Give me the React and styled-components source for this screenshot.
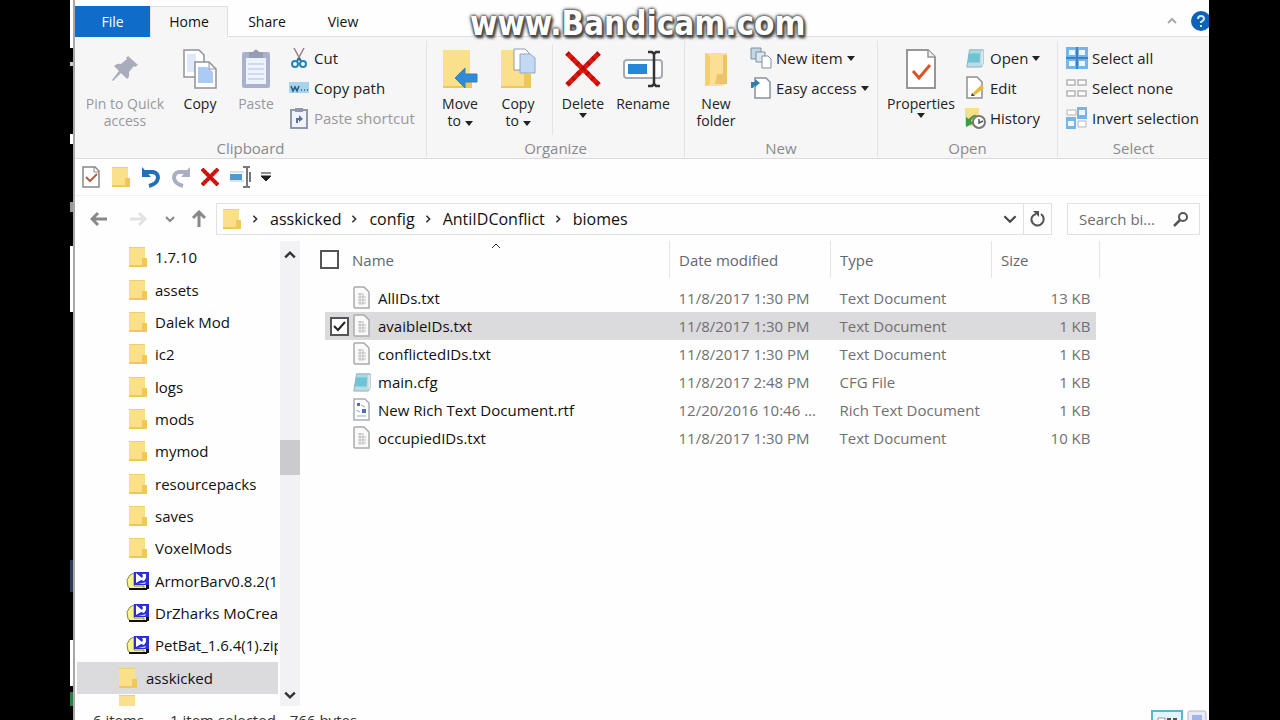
import React from "react";
import styled, { createGlobalStyle, css } from "styled-components";

const GlobalStyle = createGlobalStyle`
  * { box-sizing: border-box; }
  body {
    margin: 0;
    background: #000;
    color: #111;
    font-family: "Open Sans", "Noto Sans", sans-serif;
    font-size: 15px;
    line-height: 20px;
  }
  button, input {
    font: inherit;
    color: inherit;
  }
`;

/* ---------- icons ---------- */

const FolderIcon = ({ w = 20, h = 22 }) => (
  <svg width={w} height={h} viewBox="0 0 20 22" aria-hidden="true">
    <path d="M1 1h16v19H1z" fill="#fbe08a" />
    <path d="M14 12h5v9H1v-2h13z" fill="#f0c75c" />
    <path d="M1 1h16v1H1z" fill="#f0cf74" />
  </svg>
);

const ZipIcon = () => (
  <svg width="24" height="20" viewBox="0 0 24 20" aria-hidden="true">
    <path d="M8 2L4 4 1 9l1 7 3 2h13v-3H8z" fill="#f4f58c" stroke="#8a8a3a" />
    <path d="M3 17h18v2H3zM20 14h3v4h-3z" fill="#111" />
    <path d="M8 1h15v13H8z" fill="#2a2fd8" />
    <path d="M10 2l6 5 1-2-1-2h4v4l-2 3-3-1-5 3z" fill="#fff" />
    <path d="M12 13h7l1-2z" fill="#c9caf6" />
  </svg>
);

const TextFileIcon = () => (
  <svg width="20" height="24" viewBox="0 0 20 24" aria-hidden="true">
    <path d="M3 1h9l5 5v16H3q-1 0-1-1V2q0-1 1-1z" fill="#fafafa" stroke="#aaa" strokeWidth="1.5" />
    <path d="M6 8h4M6 11h8M6 14h8M6 17h8M8 7v12M11 7v12" stroke="#bdbdbd" />
  </svg>
);

const CfgIcon = ({ w = 20, h = 22 }) => (
  <svg width={w} height={h} viewBox="0 0 22 22" aria-hidden="true">
    <path d="M5 2h15v15l-2 4H2z" fill="#b9dbe4" stroke="#93aab2" />
    <path d="M5 3h12l-1 13H3z" fill="#6fc3d3" />
    <path d="M5 3h12v3H5z" fill="#a4dbe5" />
    <path d="M18 3h2v14l-2 3z" fill="#dfe9ec" />
  </svg>
);

const RtfIcon = () => (
  <svg width="20" height="24" viewBox="0 0 20 24" aria-hidden="true">
    <path d="M2 1h11l4 4v17H2z" fill="#fff" stroke="#a9adb5" strokeWidth="1.5" />
    <path d="M5 5h3v3H5zM10 11h4v4h-4z" fill="#4a6fb5" />
    <path d="M9 7l4 2M4 12l4 2M5 18h9" stroke="#8fa8d0" />
  </svg>
);

const PinIcon = () => (
  <svg width="30" height="32" viewBox="0 0 30 32" aria-hidden="true">
    <path d="M18 3l10 9-3 2-1-1-5 6q1 5-2 7l-6-6-8 8-1-1 7-9-5-5q3-3 7-2l6-5-1-1z" fill="#a9acba" />
  </svg>
);

const CopyIcon = () => (
  <svg width="36" height="42" viewBox="0 0 36 42" aria-hidden="true">
    <path d="M2 2h15l5 5v22H2z" fill="#fff" stroke="#8f939c" strokeWidth="1.5" />
    <path d="M5 6h9v18H5z" fill="#dfe8f8" />
    <path d="M13 14h14l7 7v19H13z" fill="#fff" stroke="#8f939c" strokeWidth="1.5" />
    <path d="M16 19h9l6 5v11H16z" fill="#a9cbf4" />
    <path d="M27 14v7h7" fill="none" stroke="#8f939c" />
  </svg>
);

const PasteIcon = () => (
  <svg width="32" height="42" viewBox="0 0 32 42" aria-hidden="true">
    <rect x="2" y="4" width="28" height="36" rx="2" fill="#aab1cc" />
    <path d="M6 10h20v26H6z" fill="#eef2fb" />
    <path d="M9 4h4q3-5 6 0h4v6H9z" fill="#969cb2" />
    <path d="M8 16h16M8 21h16M8 26h16M8 31h16" stroke="#cfdaf0" strokeWidth="2" />
  </svg>
);

const CutIcon = () => (
  <svg width="18" height="22" viewBox="0 0 18 22" aria-hidden="true">
    <path d="M4 1l7 13M14 1L7 14" stroke="#9a7d7d" strokeWidth="1.5" />
    <path d="M9 11l2 3M9 11l-2 3" stroke="#2b6a94" strokeWidth="2" />
    <circle cx="5" cy="17" r="3" fill="none" stroke="#2383b5" strokeWidth="2" />
    <circle cx="13" cy="17" r="3" fill="none" stroke="#2383b5" strokeWidth="2" />
  </svg>
);

const CopyPathIcon = () => (
  <svg width="22" height="14" viewBox="0 0 22 14" aria-hidden="true">
    <path d="M1 1h20v11H1z" fill="#a6d4ea" />
    <path d="M3 5l2 5 2-4 2 4 2-5M13 9h1M16 9h1M19 9h1" fill="none" stroke="#245c80" strokeWidth="1.5" />
  </svg>
);

const PasteShortcutIcon = () => (
  <svg width="20" height="22" viewBox="0 0 20 22" aria-hidden="true">
    <path d="M2 3h16v18H2z" fill="#f0f3fa" stroke="#9298ab" strokeWidth="2" />
    <path d="M6 1h8v4H6z" fill="#9298ab" />
    <path d="M7 16v-5h3V8l4 4-4 3v-2H9v3z" fill="#5c6c9c" />
  </svg>
);

const MoveToIcon = () => (
  <svg width="36" height="42" viewBox="0 0 36 42" aria-hidden="true">
    <path d="M1 2h27v36H1z" fill="#fbe08c" />
    <path d="M23 26h7v14H1v-2h22z" fill="#edc65e" />
    <path d="M13 30l10-10v6h12v8H23v6z" fill="#2e8bdb" stroke="#3f7fb0" />
  </svg>
);

const CopyToIcon = () => (
  <svg width="36" height="42" viewBox="0 0 36 42" aria-hidden="true">
    <path d="M1 2h27v36H1z" fill="#fbe08c" />
    <path d="M24 26h7v14H1v-2h23z" fill="#edc65e" />
    <path d="M14 1h11l4 4v17H14z" fill="#fff" stroke="#8f9bb0" />
    <path d="M20 6h10l5 4v15H20z" fill="#c3d8f2" stroke="#8ea6c8" />
  </svg>
);

const DeleteIcon = ({ size = 36, stroke = 5 }) => (
  <svg width={size} height={size} viewBox="0 0 36 36" aria-hidden="true">
    <path d="M2 2l32 32M34 2L2 34" stroke="#e0160f" strokeWidth={stroke} />
    <path d="M2 2l32 32M34 2L2 34" stroke="#7d0906" strokeDasharray="2 5" strokeWidth={stroke} opacity="0.5" />
  </svg>
);

const RenameIcon = ({ w = 42, h = 38 }) => (
  <svg width={w} height={h} viewBox="0 0 42 38" aria-hidden="true">
    <rect x="2" y="10" width="38" height="18" rx="3" fill="#fff" stroke="#a5abb5" strokeWidth="2" />
    <path d="M6 14h19v10H6z" fill="#2487d8" />
    <path d="M26 2h4l2 2 2-2h4M26 36h4l2-2 2 2h4M32 3v32" fill="none" stroke="#333" strokeWidth="2.5" />
  </svg>
);

const QuickRenameIcon = () => (
  <svg width="22" height="22" viewBox="0 0 22 22" aria-hidden="true">
    <path d="M1 6h14M1 15h14" stroke="#b3c6d6" />
    <path d="M1 8h12v6H1z" fill="#4b9bd2" />
    <path d="M14 1h3l1 1 1-1h2M14 21h3l1-1 1 1h2M18 2v18M21 6v10" fill="none" stroke="#777" strokeWidth="2" />
  </svg>
);

const NewFolderIcon = () => (
  <svg width="26" height="38" viewBox="0 0 26 38" aria-hidden="true">
    <path d="M2 3h22v30l-5 3H2z" fill="#fbdf92" />
    <path d="M2 3l5 3v28l-5 2z" fill="#f3cf74" />
    <path d="M14 24h6V5h4v29H12z" fill="#eec46a" />
  </svg>
);

const NewItemIcon = () => (
  <svg width="22" height="24" viewBox="0 0 22 24" aria-hidden="true">
    <path d="M1 2h10v11H1z" fill="#c3d7e6" stroke="#7f8f9d" />
    <path d="M6 6h9v10H6z" fill="#dbe8f3" stroke="#7f8f9d" />
    <path d="M12 10h6l3 3v9h-9z" fill="#fff" stroke="#7f8f9d" />
  </svg>
);

const EasyAccessIcon = () => (
  <svg width="22" height="24" viewBox="0 0 22 24" aria-hidden="true">
    <path d="M5 2h11l4 4v16H5z" fill="#fff" stroke="#8c929b" strokeWidth="1.5" />
    <path d="M1 12V6h4V3l5 4-5 4V9L3 12z" fill="#2d7fae" />
  </svg>
);

const PropertiesIcon = () => (
  <svg width="32" height="42" viewBox="0 0 32 42" aria-hidden="true">
    <path d="M2 2h21l7 7v31H2z" fill="#fff" stroke="#979797" strokeWidth="2" />
    <path d="M23 2v7h7" fill="#eee" stroke="#979797" strokeWidth="1.5" />
    <path d="M8 23l6 7 11-13" fill="none" stroke="#dc5424" strokeWidth="3" />
  </svg>
);

const QuickPropertiesIcon = () => (
  <svg width="20" height="22" viewBox="0 0 20 22" aria-hidden="true">
    <path d="M2 1h12l4 4v16H2z" fill="#fff" stroke="#888" strokeWidth="1.5" />
    <path d="M13 1v5h5" fill="none" stroke="#888" />
    <path d="M5 11l4 4 7-7" fill="none" stroke="#b5603f" strokeWidth="2" />
  </svg>
);

const EditIcon = () => (
  <svg width="20" height="24" viewBox="0 0 20 24" aria-hidden="true">
    <path d="M2 1h10l5 5v16H2z" fill="#fff" stroke="#909090" strokeWidth="1.5" />
    <path d="M7 18l9-9 3 3-9 7z" fill="#eab839" />
    <path d="M6 20l1-3 3 3z" fill="#444" />
  </svg>
);

const HistoryIcon = () => (
  <svg width="22" height="24" viewBox="0 0 22 24" aria-hidden="true">
    <path d="M1 2h14v18H1z" fill="#fbdf88" />
    <path d="M2 21V11l3 2q4-5 8-4-5 3-6 6l3 2z" fill="#3c9c4a" />
    <circle cx="15" cy="16" r="6" fill="#fff" stroke="#777" strokeWidth="2" />
    <path d="M15 13v4l4-2" fill="none" stroke="#555" strokeWidth="1.5" />
  </svg>
);

const SelectAllIcon = () => (
  <svg width="22" height="24" viewBox="0 0 22 24" aria-hidden="true">
    <path d="M0 1h22v22H0z" fill="#78b4e8" />
    <path d="M0 12h22M11 1v22" stroke="#3b82c4" strokeWidth="2" />
    <path d="M3 4h6v5H3zM13 4h6v5h-6zM3 15h6v5H3zM13 15h6v5h-6z" fill="#eef6fe" />
  </svg>
);

const SelectNoneIcon = () => (
  <svg width="22" height="22" viewBox="0 0 22 22" aria-hidden="true">
    <path d="M1 3h8v5H1zM12 3h8v5h-8zM1 14h8v5H1zM12 14h8v5h-8z" fill="#fff" stroke="#b4b4b4" strokeWidth="1.5" />
  </svg>
);

const InvertIcon = () => (
  <svg width="22" height="24" viewBox="0 0 22 24" aria-hidden="true">
    <path d="M1 4h9v5H1zM12 15h8v6h-8z" fill="#fff" stroke="#b4b4b4" />
    <path d="M11 1h10v12H11zM0 11h10v12H0z" fill="#78b4e8" />
    <path d="M13 4h6v5h-6zM2 15h6v5H2z" fill="#eef6fe" />
  </svg>
);

const UndoIcon = ({ color, flip }) => (
  <svg width="20" height="22" viewBox="0 0 20 22" aria-hidden="true">
    <g transform={flip ? "translate(20 0) scale(-1 1)" : undefined}>
      <path d="M4 6h8q5 1 5 6-1 6-9 8" fill="none" stroke={color} strokeWidth="4" />
      <path d="M1 1v10h9z" fill={color} />
    </g>
  </svg>
);

const ArrowIcon = ({ color, turn = 0 }) => (
  <svg width="18" height="18" viewBox="0 0 18 18" aria-hidden="true">
    <path
      transform={`rotate(${turn} 9 9)`}
      d="M17 9H3M8 3L2 9l6 6"
      fill="none"
      stroke={color}
      strokeWidth="3"
    />
  </svg>
);

const Chevron = ({ w = 10, turn = 0, color = "#333", stroke = 2 }) => (
  <svg width={w} height={w} viewBox="0 0 10 10" aria-hidden="true">
    <path transform={`rotate(${turn} 5 5)`} d="M1 3l4 4 4-4" fill="none" stroke={color} strokeWidth={stroke} />
  </svg>
);

const Caret = () => (
  <svg width="8" height="6" viewBox="0 0 8 6" aria-hidden="true">
    <path d="M0 1h8L4 6z" fill="#222" />
  </svg>
);

const CustomizeIcon = () => (
  <svg width="10" height="10" viewBox="0 0 10 10" aria-hidden="true">
    <path d="M0 1h10M0 4h10L5 9z" fill="#222" stroke="#222" strokeWidth="1" />
  </svg>
);

const RefreshIcon = () => (
  <svg width="16" height="18" viewBox="0 0 16 18" aria-hidden="true">
    <path d="M11 4q4 3 2 8-3 5-8 3-5-3-3-8 1-2 4-3" fill="none" stroke="#555" strokeWidth="2" />
    <path d="M3 1h6v6z" fill="#555" />
  </svg>
);

const SearchIcon = () => (
  <svg width="16" height="16" viewBox="0 0 16 16" aria-hidden="true">
    <circle cx="10" cy="6" r="4" fill="none" stroke="#555" strokeWidth="2" />
    <path d="M7 9l-6 6" stroke="#555" strokeWidth="2.5" />
  </svg>
);

const HelpIcon = () => (
  <svg width="20" height="20" viewBox="0 0 20 20" aria-hidden="true">
    <circle cx="10" cy="10" r="10" fill="#0d62b8" />
    <path d="M7 8q0-3 3-3t3 3q0 1-3 3v1M10 14v2" fill="none" stroke="#cfe6fb" strokeWidth="2" />
  </svg>
);

const DetailsViewIcon = () => (
  <svg width="32" height="20" viewBox="0 0 32 20" aria-hidden="true">
    <path d="M1 1h30v24H1z" fill="#e3f5fb" stroke="#5cb4cf" strokeWidth="2" />
    <path d="M7 8h7v8H7z" fill="#fff" stroke="#999" />
    <path d="M16 9h4M22 9h4" stroke="#555" strokeWidth="2" />
  </svg>
);

const ThumbsViewIcon = () => (
  <svg width="20" height="14" viewBox="0 0 20 14" aria-hidden="true">
    <rect x="1" y="1" width="18" height="16" rx="2" fill="#e9ecf6" stroke="#b3b6c4" />
    <path d="M5 5h10v9H5z" fill="#9fb4e8" />
  </svg>
);

/* ---------- window ---------- */

const Screen = styled.div`
  display: flex;
  height: 100vh;
  padding: 0 71px 0 70px;
  overflow: hidden;
`;

const DesktopEdge = styled.div`
  flex: none;
  width: 5px;
  border-right: 2px solid #a8a8ac;
  background: linear-gradient(
    #fff 0 48px, #000 48px 62px, #ccc 62px 66px, #000 66px 134px,
    #fff 134px 144px, #000 144px 202px, #999 202px 212px, #000 212px 246px,
    #fff 246px 312px, #000 312px 560px, #2a3d58 560px 592px, #000 592px 640px,
    #fff 640px 686px, #000 686px 692px, #2f7d3c 692px 706px, #000 706px
  );
`;

const Window = styled.main`
  position: relative;
  flex: 1;
  min-width: 0;
  display: flex;
  flex-direction: column;
  background: #fefefe;
  overflow: hidden;
`;

const Watermark = styled.div`
  position: absolute;
  top: 4px;
  left: 395px;
  font: bold 33px/40px "DejaVu Sans Condensed", "DejaVu Sans", sans-serif;
  color: #fff;
  text-shadow: 0 0 2px #444, 0 0 3px #444, 0 0 4px #555, 1px 2px 3px #444, 2px 3px 3px #555;
`;

const PlainButton = styled.button`
  display: flex;
  align-items: center;
  justify-content: center;
  flex: none;
  padding: 0;
  border: 0;
  background: none;
`;

const TabBar = styled.nav`
  display: flex;
  height: 37px;
  padding-top: 6px;
  border-bottom: 1px solid #e2e0e2;
`;

const Tab = styled(PlainButton)`
  width: ${(p) => p.$width}px;
  height: 31px;
  font-size: 14px;
  ${(p) => p.$kind === "file" && css`
    background: #0f6cc9;
    color: #fff;
  `}
  ${(p) => p.$kind === "active" && css`
    background: #f6f6f7;
    border: 1px solid #e2e0e2;
    border-bottom: 0;
  `}
`;

const TabTools = styled.div`
  display: flex;
  align-items: center;
  gap: 14px;
  margin-left: auto;
  margin-right: -2px;
`;

const Ribbon = styled.div`
  display: flex;
  height: 122px;
  background: #f6f6f7;
  border-bottom: 1px solid #dcdadc;
`;

const Group = styled.section`
  display: flex;
  flex-direction: column;
  flex: ${(p) => (p.$width ? `none` : "1")};
  width: ${(p) => (p.$width ? `${p.$width}px` : "auto")};
  min-width: 0;
  margin: 4px 0 1px;
  border-right: ${(p) => (p.$width ? "1px solid #e4e2e5" : "0")};
`;

const GroupBody = styled.div`
  display: flex;
  flex: 1;
  padding-left: ${(p) => p.$left || 0}px;
`;

const GroupName = styled.h2`
  margin: 0;
  font-size: 15px;
  font-weight: 400;
  line-height: 18px;
  text-align: center;
  color: #8a8a8c;
`;

const BigButton = styled(PlainButton)`
  flex-direction: column;
  justify-content: flex-start;
  width: ${(p) => p.$width}px;
  font-size: 14px;
  line-height: 17px;
  color: ${(p) => (p.disabled ? "#98989c" : "#222")};
`;

const BigIcon = styled.span`
  display: flex;
  align-items: center;
  height: 48px;
  margin: 4px 0 2px;
`;

const SmallColumn = styled.div`
  display: flex;
  flex-direction: column;
  padding: 2px 0 0 ${(p) => p.$left || 0}px;
`;

const SmallButton = styled(PlainButton)`
  justify-content: flex-start;
  gap: 4px;
  height: 30px;
  white-space: nowrap;
  color: ${(p) => (p.disabled ? "#98989c" : "#222")};
`;

const SmallIcon = styled.span`
  display: flex;
  justify-content: center;
  width: 22px;
`;

const Divider = styled.div`
  width: 1px;
  margin: 4px 0 4px 5px;
  background: #e4e2e5;
`;

const QuickBar = styled.div`
  display: flex;
  align-items: center;
  gap: 10px;
  height: 36px;
  padding-left: 6px;
`;

const AddressRow = styled.div`
  display: flex;
  align-items: center;
  height: 46px;
  padding: 0 9px 0 12px;
  border-top: 1px solid #f1f0f2;
`;

const NavButtons = styled.div`
  display: flex;
  align-items: center;
  gap: 15px;
  width: 129px;
`;

const NavButton = styled(PlainButton)`
  width: ${(p) => p.$width}px;
`;

const AddressBox = styled.div`
  display: flex;
  align-items: center;
  flex: 1;
  min-width: 0;
  height: 32px;
  padding-left: 5px;
  border: 1px solid #e2e0e3;
`;

const Crumbs = styled.ol`
  display: flex;
  align-items: center;
  flex: 1;
  margin: 0;
  padding: 0 0 0 9px;
  font-size: 16px;
  list-style: none;
`;

const Crumb = styled.li`
  display: flex;
  align-items: center;
  gap: 11px;
  margin-right: 9px;

  a {
    color: #111;
    text-decoration: none;
  }
`;

const Refresh = styled(PlainButton)`
  width: 28px;
  height: 30px;
  margin-left: 6px;
  border-left: 1px solid #e2e0e3;
`;

const SearchBox = styled.label`
  display: flex;
  align-items: center;
  gap: 14px;
  width: 133px;
  height: 32px;
  margin-left: 15px;
  padding: 0 10px 0 11px;
  border: 1px solid #e2e0e3;

  input {
    flex: 1;
    min-width: 0;
    padding: 0;
    border: 0;
    outline: 0;
    background: none;
    text-overflow: ellipsis;
  }
  input::placeholder {
    color: #6d6d70;
    opacity: 1;
  }
`;

const Body = styled.div`
  display: flex;
  flex: 1;
  min-height: 0;
`;

const Tree = styled.ul`
  display: grid;
  grid-template-rows: repeat(14, 1fr) 12px;
  width: 203px;
  margin: 0;
  padding: 0 0 0 2px;
  list-style: none;
  overflow: hidden;
`;

const TreeItem = styled.li`
  display: flex;
  align-items: ${(p) => (p.$cut ? "flex-start" : "center")};
  gap: ${(p) => (p.$root ? 8 : 5)}px;
  min-height: 0;
  padding-left: ${(p) => (p.$root ? 41 : 49)}px;
  overflow: hidden;
  white-space: nowrap;
  background: ${(p) => (p.$selected ? "#dbdadc" : "none")};
`;

const TreeIcon = styled.span`
  display: flex;
  flex: none;
  justify-content: center;
  width: ${(p) => (p.$root ? 20 : 24)}px;
`;

const ScrollBar = styled.div`
  display: flex;
  flex-direction: column;
  justify-content: space-between;
  align-items: center;
  width: 20px;
  margin-left: 2px;
  padding: 8px 0 5px;
  background: #f2f1f3;
`;

const Thumb = styled.div`
  width: 20px;
  height: 35px;
  margin-bottom: 36px;
  background: #cbcacc;
`;

const Files = styled.div`
  flex: 1;
  min-width: 0;
  padding: 0 109px 0 20px;
`;

const FileTable = styled.table`
  width: 100%;
  border-collapse: collapse;
  table-layout: fixed;
`;

const Col = styled.col`
  width: ${(p) => (p.$width ? `${p.$width}px` : "auto")};
`;

const HeadCell = styled.th`
  position: relative;
  height: 37px;
  padding: 0 0 0 ${(p) => p.$pad || 0}px;
  border-right: ${(p) => (p.$line ? "1px solid #e6e4e7" : "0")};
  font-weight: 400;
  text-align: left;
  color: #66666a;
`;

const SortMark = styled.span`
  position: absolute;
  top: -6px;
  left: 44%;
`;

const Spacer = styled.tr`
  height: 6px;
`;

const Row = styled.tr`
  height: 28px;
`;

const Cell = styled.td`
  padding: 0 ${(p) => p.$right || 0}px 0 ${(p) => p.$left || 0}px;
  white-space: nowrap;
  overflow: hidden;
  text-overflow: ellipsis;
  text-align: ${(p) => (p.$end ? "right" : "left")};
  color: #707074;
  background: ${(p) => (p.$selected ? "#dbdadc" : "none")};
`;

const FileName = styled.span`
  display: flex;
  align-items: center;
  gap: 6px;
  color: #111;
`;

const Check = styled.input.attrs({ type: "checkbox" })`
  appearance: none;
  display: block;
  width: 19px;
  height: 19px;
  margin: 0;
  border: 2px solid #555;
  background: #fff;

  &:checked {
    background: #fff url("data:image/svg+xml,%3Csvg xmlns='http://www.w3.org/2000/svg' viewBox='0 0 15 15'%3E%3Cpath d='M2 7l4 4 7-8' fill='none' stroke='%23222' stroke-width='2'/%3E%3C/svg%3E");
  }
`;

const StatusBar = styled.footer`
  display: flex;
  gap: 14px;
  height: 14px;
  padding: 4px 2px 0 18px;
  overflow: hidden;
  color: #333;
`;

const ItemCount = styled.span`
  margin-right: 12px;
`;

const ViewSwitch = styled.div`
  display: flex;
  gap: 4px;
  margin-left: auto;
  align-items: flex-start;
`;

const tree = [
  { name: "1.7.10" },
  { name: "assets" },
  { name: "Dalek Mod" },
  { name: "ic2" },
  { name: "logs" },
  { name: "mods" },
  { name: "mymod" },
  { name: "resourcepacks" },
  { name: "saves" },
  { name: "VoxelMods" },
  { name: "ArmorBarv0.8.2(1", zip: true },
  { name: "DrZharks MoCrea", zip: true },
  { name: "PetBat_1.6.4(1).zip", zip: true },
  { name: "asskicked", root: true, selected: true },
  { name: "", root: true, cut: true },
];

const files = [
  { name: "AllIDs.txt", date: "11/8/2017 1:30 PM", type: "Text Document", size: "13 KB", icon: <TextFileIcon /> },
  { name: "avaibleIDs.txt", date: "11/8/2017 1:30 PM", type: "Text Document", size: "1 KB", icon: <TextFileIcon />, selected: true },
  { name: "conflictedIDs.txt", date: "11/8/2017 1:30 PM", type: "Text Document", size: "1 KB", icon: <TextFileIcon /> },
  { name: "main.cfg", date: "11/8/2017 2:48 PM", type: "CFG File", size: "1 KB", icon: <CfgIcon /> },
  { name: "New Rich Text Document.rtf", date: "12/20/2016 10:46 AM", type: "Rich Text Document", size: "1 KB", icon: <RtfIcon /> },
  { name: "occupiedIDs.txt", date: "11/8/2017 1:30 PM", type: "Text Document", size: "10 KB", icon: <TextFileIcon /> },
];

const Big = ({ icon, width, disabled, children }) => (
  <BigButton $width={width} disabled={disabled}>
    <BigIcon>{icon}</BigIcon>
    {children}
  </BigButton>
);

const Small = ({ icon, menu, disabled, children }) => (
  <SmallButton disabled={disabled}>
    <SmallIcon>{icon}</SmallIcon>
    {children}
    {menu && <Caret />}
  </SmallButton>
);

function RibbonBar() {
  return (
    <Ribbon>
      <Group $width={352}>
        <GroupBody>
          <Big icon={<PinIcon />} width={100} disabled>
            <span>Pin to Quick</span>
            <span>access</span>
          </Big>
          <Big icon={<CopyIcon />} width={50}>Copy</Big>
          <Big icon={<PasteIcon />} width={62} disabled>Paste</Big>
          <SmallColumn $left={1}>
            <Small icon={<CutIcon />}>Cut</Small>
            <Small icon={<CopyPathIcon />}>Copy path</Small>
            <Small icon={<PasteShortcutIcon />} disabled>Paste shortcut</Small>
          </SmallColumn>
        </GroupBody>
        <GroupName>Clipboard</GroupName>
      </Group>
      <Group $width={258}>
        <GroupBody $left={4}>
          <Big icon={<MoveToIcon />} width={58}>
            <span>Move</span>
            <span>to <Caret /></span>
          </Big>
          <Big icon={<CopyToIcon />} width={58}>
            <span>Copy</span>
            <span>to <Caret /></span>
          </Big>
          <Divider />
          <Big icon={<DeleteIcon />} width={60}>
            <span>Delete</span>
            <Caret />
          </Big>
          <Big icon={<RenameIcon />} width={60}>Rename</Big>
        </GroupBody>
        <GroupName>Organize</GroupName>
      </Group>
      <Group $width={193}>
        <GroupBody $left={4}>
          <Big icon={<NewFolderIcon />} width={54}>
            <span>New</span>
            <span>folder</span>
          </Big>
          <SmallColumn $left={7}>
            <Small icon={<NewItemIcon />} menu>New item</Small>
            <Small icon={<EasyAccessIcon />} menu>Easy access</Small>
          </SmallColumn>
        </GroupBody>
        <GroupName>New</GroupName>
      </Group>
      <Group $width={180}>
        <GroupBody $left={4}>
          <Big icon={<PropertiesIcon />} width={78}>
            <span>Properties</span>
            <Caret />
          </Big>
          <SmallColumn $left={4}>
            <Small icon={<CfgIcon />} menu>Open</Small>
            <Small icon={<EditIcon />}>Edit</Small>
            <Small icon={<HistoryIcon />}>History</Small>
          </SmallColumn>
        </GroupBody>
        <GroupName>Open</GroupName>
      </Group>
      <Group>
        <GroupBody $left={8}>
          <SmallColumn>
            <Small icon={<SelectAllIcon />}>Select all</Small>
            <Small icon={<SelectNoneIcon />}>Select none</Small>
            <Small icon={<InvertIcon />}>Invert selection</Small>
          </SmallColumn>
        </GroupBody>
        <GroupName>Select</GroupName>
      </Group>
    </Ribbon>
  );
}

function AddressBar() {
  const path = ["asskicked", "config", "AntiIDConflict", "biomes"];
  return (
    <AddressRow>
      <NavButtons>
        <NavButton $width={24} aria-label="Back"><ArrowIcon color="#888" /></NavButton>
        <NavButton $width={24} aria-label="Forward"><ArrowIcon color="#e2e2e4" turn={180} /></NavButton>
        <NavButton $width={10} aria-label="Recent"><Chevron color="#888" /></NavButton>
        <NavButton $width={18} aria-label="Up"><ArrowIcon color="#888" turn={90} /></NavButton>
      </NavButtons>
      <AddressBox>
        <FolderIcon h={24} />
        <Crumbs>
          {path.map((part) => (
            <Crumb key={part}>
              <Chevron w={8} turn={-90} />
              <a href="#path">{part}</a>
            </Crumb>
          ))}
        </Crumbs>
        <PlainButton aria-label="Previous locations"><Chevron w={14} color="#444" stroke={1.5} /></PlainButton>
        <Refresh aria-label="Refresh"><RefreshIcon /></Refresh>
      </AddressBox>
      <SearchBox>
        <input type="text" placeholder="Search biomes" aria-label="Search biomes" />
        <SearchIcon />
      </SearchBox>
    </AddressRow>
  );
}

function FileList() {
  return (
    <Files>
      <FileTable>
        <colgroup>
          <Col $width={5} />
          <Col $width={27} />
          <Col />
          <Col $width={161} />
          <Col $width={161} />
          <Col $width={104} />
          <Col $width={4} />
        </colgroup>
        <thead>
          <tr>
            <HeadCell colSpan={2}><Check aria-label="Select all items" /></HeadCell>
            <HeadCell $line>
              Name
              <SortMark><Chevron turn={180} stroke={1} /></SortMark>
            </HeadCell>
            <HeadCell $pad={9} $line>Date modified</HeadCell>
            <HeadCell $pad={9} $line>Type</HeadCell>
            <HeadCell colSpan={2} $pad={9} $line>Size</HeadCell>
          </tr>
        </thead>
        <tbody>
          <Spacer />
          {files.map(({ name, date, type, size, icon, selected }) => (
            <Row key={name}>
              <Cell />
              <Cell $left={5} $selected={selected}>
                {selected && <Check defaultChecked aria-label={name} />}
              </Cell>
              <Cell $selected={selected}>
                <FileName>{icon}{name}</FileName>
              </Cell>
              <Cell $left={9} $right={14} $selected={selected}>{date}</Cell>
              <Cell $left={9} $selected={selected}>{type}</Cell>
              <Cell $right={5} $end $selected={selected}>{size}</Cell>
            </Row>
          ))}
        </tbody>
      </FileTable>
    </Files>
  );
}

function App() {
  return (
    <Screen>
      <GlobalStyle />
      <DesktopEdge />
      <Window>
        <TabBar>
          <Tab $width={75} $kind="file">File</Tab>
          <Tab $width={78} $kind="active">Home</Tab>
          <Tab $width={78}>Share</Tab>
          <Tab $width={74}>View</Tab>
          <TabTools>
            <PlainButton aria-label="Minimize the ribbon"><Chevron turn={180} color="#aaa" /></PlainButton>
            <PlainButton aria-label="Help"><HelpIcon /></PlainButton>
          </TabTools>
        </TabBar>
        <RibbonBar />
        <QuickBar>
          <PlainButton aria-label="Properties"><QuickPropertiesIcon /></PlainButton>
          <PlainButton aria-label="New folder"><FolderIcon /></PlainButton>
          <PlainButton aria-label="Undo"><UndoIcon color="#2170b8" /></PlainButton>
          <PlainButton aria-label="Redo"><UndoIcon color="#a9aec4" flip /></PlainButton>
          <PlainButton aria-label="Delete"><DeleteIcon size={18} stroke={8} /></PlainButton>
          <PlainButton aria-label="Rename"><QuickRenameIcon /></PlainButton>
          <PlainButton aria-label="Customize toolbar"><CustomizeIcon /></PlainButton>
        </QuickBar>
        <AddressBar />
        <Body>
          <Tree>
            {tree.map((item) => (
              <TreeItem key={item.name} $root={item.root} $selected={item.selected} $cut={item.cut}>
                <TreeIcon $root={item.root}>{item.zip ? <ZipIcon /> : <FolderIcon />}</TreeIcon>
                {item.name}
              </TreeItem>
            ))}
          </Tree>
          <ScrollBar>
            <Chevron w={12} turn={180} />
            <Thumb />
            <Chevron w={12} />
          </ScrollBar>
          <FileList />
        </Body>
        <StatusBar>
          <ItemCount>6 items</ItemCount>
          <span>1 item selected</span>
          <span>766 bytes</span>
          <ViewSwitch>
            <PlainButton aria-label="Details view"><DetailsViewIcon /></PlainButton>
            <PlainButton aria-label="Thumbnail view"><ThumbsViewIcon /></PlainButton>
          </ViewSwitch>
        </StatusBar>
        <Watermark>www.Bandicam.com</Watermark>
      </Window>
    </Screen>
  );
}

export default App;
